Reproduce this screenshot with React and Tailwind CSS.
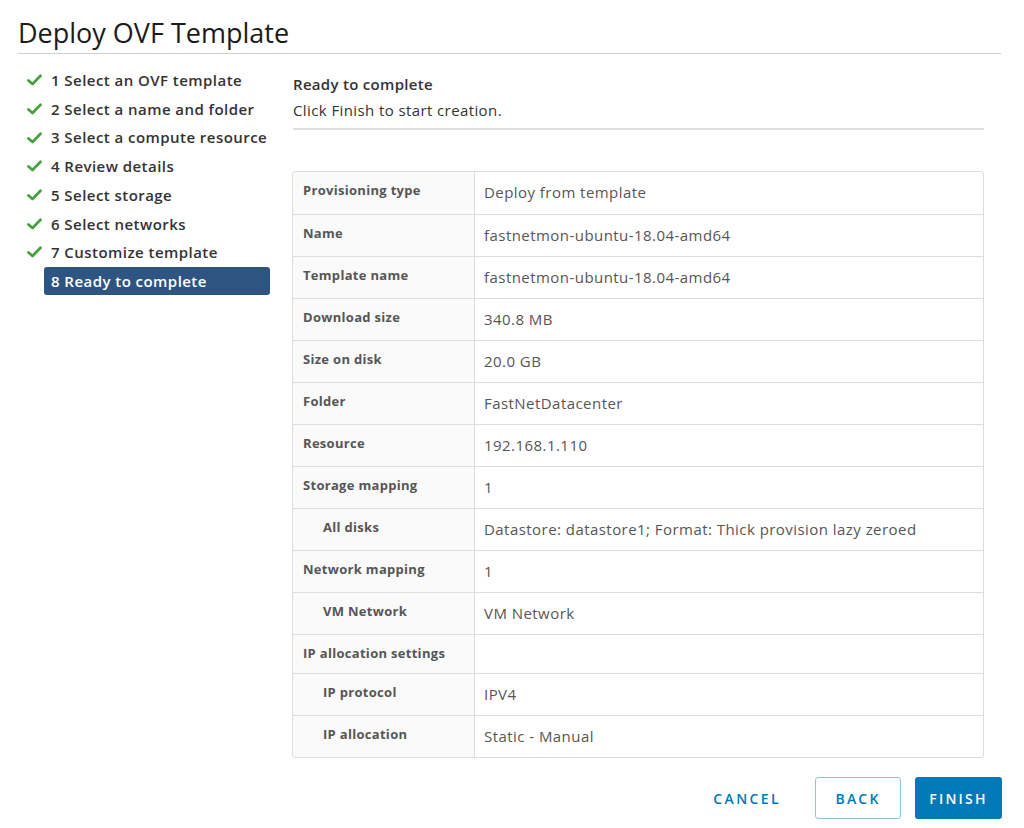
import React from 'react'

const steps = [
  '1 Select an OVF template',
  '2 Select a name and folder',
  '3 Select a compute resource',
  '4 Review details',
  '5 Select storage',
  '6 Select networks',
  '7 Customize template',
]

const rows = [
  { label: 'Provisioning type', value: 'Deploy from template' },
  { label: 'Name', value: 'fastnetmon-ubuntu-18.04-amd64' },
  { label: 'Template name', value: 'fastnetmon-ubuntu-18.04-amd64' },
  { label: 'Download size', value: '340.8 MB' },
  { label: 'Size on disk', value: '20.0 GB' },
  { label: 'Folder', value: 'FastNetDatacenter' },
  { label: 'Resource', value: '192.168.1.110' },
  { label: 'Storage mapping', value: '1' },
  { label: 'All disks', value: 'Datastore: datastore1; Format: Thick provision lazy zeroed', sub: true },
  { label: 'Network mapping', value: '1' },
  { label: 'VM Network', value: 'VM Network', sub: true },
  { label: 'IP allocation settings', value: '', short: true },
  { label: 'IP protocol', value: 'IPV4', sub: true },
  { label: 'IP allocation', value: 'Static - Manual', sub: true },
]

function Check() {
  return (
    <svg width="15" height="12" viewBox="0 0 15 12" className="shrink-0">
      <path d="M1.5 6.5 L5.5 10 L13.5 1.8" fill="none" stroke="#48a23f" strokeWidth="2.8" strokeLinecap="round" strokeLinejoin="round" />
    </svg>
  )
}

export default function App() {
  return (
    <div className="w-[1024px] h-[828px] bg-white text-[#333] px-[18px] pt-[16px]" style={{ fontFamily: '"Open Sans", "Noto Sans", sans-serif' }}>
      <h1 className="text-[27px] leading-[34px] text-[#1b1b1b] font-normal">Deploy OVF Template</h1>
      <div className="mt-[3px] mr-[5px] border-b border-[#cfcfcf]" />

      <div className="flex mt-[12px]">
        <nav className="w-[274px] shrink-0 flex flex-col">
          {steps.map((s) => (
            <div key={s} className="h-[28.7px] flex items-center text-[15px] font-semibold tracking-[0.45px] text-[#333]">
              <div className="w-[33px] pl-[9px]"><Check /></div>
              <span>{s}</span>
            </div>
          ))}
          <div className="h-[28.7px] flex items-center">
            <div className="ml-[26px] w-[226px] h-[28px] rounded-[3px] bg-[#2e5581] text-white text-[15px] font-semibold tracking-[0.45px] pl-[7px] flex items-center">8 Ready to complete</div>
          </div>
        </nav>

        <main className="flex-1 flex flex-col">
          <div className="w-[692px] pl-[1px]">
            <div className="text-[15px] font-semibold tracking-[0.3px] text-[#333] leading-[20px] mt-[8px]">Ready to complete</div>
            <div className="text-[15px] tracking-[0.4px] text-[#333] leading-[20px] mt-[6px]">Click Finish to start creation.</div>
            <div className="mt-[8px] border-b-2 border-[#dedede]" />
          </div>

          <div className="mt-[41px] w-[692px] border border-[#dddddd] rounded-[3px] overflow-hidden">
            {rows.map((r, i) => (
              <div key={r.label} className={`flex ${r.short ? 'h-[39px]' : 'h-[42px]'} ${i > 0 ? 'border-t border-[#dddddd]' : ''}`}>
                <div className={`w-[182px] shrink-0 bg-[#fafafa] border-r border-[#dddddd] text-[13px] font-bold tracking-[0.3px] text-[#565656] pt-[9px] ${r.sub ? 'pl-[30px]' : 'pl-[10px]'}`}>{r.label}</div>
                <div className="flex-1 text-[15px] tracking-[0.45px] text-[#565656] pl-[9px] pt-[9px]">{r.value}</div>
              </div>
            ))}
          </div>

          <div className="flex justify-end items-center gap-[14px] mt-[19px] mr-[4px]">
            <button className="h-[42px] px-[20px] text-[14px] font-semibold tracking-[2.4px] text-[#0079b8]">CANCEL</button>
            <button className="h-[42px] w-[86px] rounded-[3px] border border-[#8fc4e0] text-[14px] font-semibold tracking-[2.2px] text-[#0079b8]">BACK</button>
            <button className="h-[42px] w-[87px] rounded-[3px] bg-[#0079b8] text-[14px] font-semibold tracking-[2.2px] text-white">FINISH</button>
          </div>
        </main>
      </div>
    </div>
  )
}
